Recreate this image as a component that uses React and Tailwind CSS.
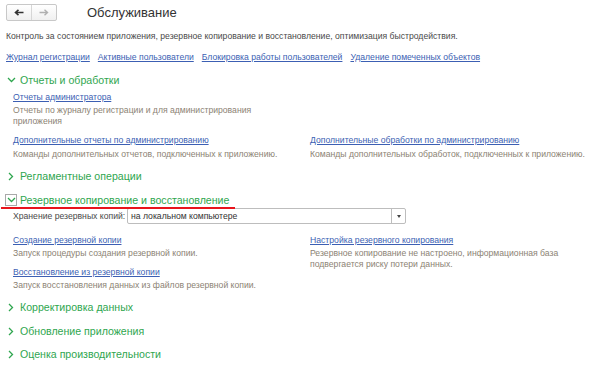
import React from "react";

const F = { fontFamily: '"Liberation Sans", Arial, sans-serif' };

function ChevDown() {
  return (
    <svg width="9" height="6" viewBox="0 0 9 6" className="shrink-0">
      <path d="M1 1 L4.5 4.5 L8 1" fill="none" stroke="#2fa64f" strokeWidth="1.3" />
    </svg>
  );
}
function ChevRight() {
  return (
    <svg width="6" height="9" viewBox="0 0 6 9" className="shrink-0">
      <path d="M1 1 L4.5 4.5 L1 8" fill="none" stroke="#2fa64f" strokeWidth="1.3" />
    </svg>
  );
}

function Link({ children }) {
  return <span className="text-[#3c5fb3] underline decoration-[#3c5fb3] underline-offset-[1px] text-[8.65px] leading-[12px] whitespace-nowrap">{children}</span>;
}
function LinkRow({ children, className = "" }) {
  return <div className={"h-[12px] leading-[12px] " + className}><Link>{children}</Link></div>;
}
function Desc({ children, className = "" }) {
  return <div className={"text-[#8c8374] text-[8.65px] leading-[11px] whitespace-nowrap " + className}>{children}</div>;
}
function Header({ open, boxed, children, className = "" }) {
  return (
    <div className={"flex items-center h-[18px] " + className}>
      {boxed ? (
        <div className="w-[12px] h-[12px] flex items-center justify-center ml-[5px] mr-[3px] border border-[#a9a9a9] bg-white">
          <ChevDown />
        </div>
      ) : (
        <div className="w-[12px] h-[12px] flex items-center justify-center ml-[5px] mr-[3px]">
          {open ? <ChevDown /> : <ChevRight />}
        </div>
      )}
      <span className="text-[#2fa64f] text-[10.6px] leading-[14px] whitespace-nowrap">{children}</span>
    </div>
  );
}

export default function App() {
  return (
    <div className="w-[601px] h-[377px] bg-white overflow-hidden" style={F}>
      {/* top bar */}
      <div className="flex items-center pt-[4px] pl-[6px]">
        <div className="flex h-[17px] border border-[#c8c8c8] rounded-[2px] bg-gradient-to-b from-white to-[#f0f0f0]">
          <div className="w-[25px] flex items-center justify-center border-r border-[#d6d6d6]">
            <svg width="10" height="7" viewBox="0 0 10 7"><path d="M9.5 3.5 H2 M4.5 0.8 L1.5 3.5 L4.5 6.2" fill="none" stroke="#333" strokeWidth="1.6" /></svg>
          </div>
          <div className="w-[24px] flex items-center justify-center">
            <svg width="10" height="7" viewBox="0 0 10 7"><path d="M0.5 3.5 H8 M5.5 0.8 L8.5 3.5 L5.5 6.2" fill="none" stroke="#b0b0b0" strokeWidth="1.4" /></svg>
          </div>
        </div>
        <div className="ml-[30px] text-[13px] text-[#333] leading-[17px]">Обслуживание</div>
      </div>

      <div className="pl-[6px] mt-[9px] h-[12px] text-[8.65px] leading-[12px] text-[#4a4a4a] whitespace-nowrap">
        Контроль за состоянием приложения, резервное копирование и восстановление, оптимизация быстродействия.
      </div>

      <div className="pl-[6px] mt-[9px] h-[12px] flex gap-[8px] leading-[12px]">
        <Link>Журнал регистрации</Link>
        <Link>Активные пользователи</Link>
        <Link>Блокировка работы пользователей</Link>
        <Link>Удаление помеченных объектов</Link>
      </div>

      <Header open className="mt-[8px]">Отчеты и обработки</Header>
      <div className="pl-[13px] grid grid-cols-[297px_1fr]">
        <div>
          <LinkRow>Отчеты администратора</LinkRow>
          <Desc className="mt-[4px]">Отчеты по журналу регистрации и для администрирования<br />приложения</Desc>
        </div>
        <div />
        <div className="mt-[5px]">
          <LinkRow>Дополнительные отчеты по администрированию</LinkRow>
          <Desc className="mt-[5px]">Команды дополнительных отчетов, подключенных к приложению.</Desc>
        </div>
        <div className="mt-[5px]">
          <LinkRow>Дополнительные обработки по администрированию</LinkRow>
          <Desc className="mt-[5px]">Команды дополнительных обработок, подключенных к приложению.</Desc>
        </div>
      </div>

      <Header className="mt-[7px]">Регламентные операции</Header>

      <div className="relative mt-[6px]">
        <Header open boxed className="!h-[17px]">Резервное копирование и восстановление</Header>
        <div className="absolute left-[1px] top-[16px] w-[234px] h-[2px] bg-[#e8141c]" />
      </div>
      <div className="pl-[13px] flex items-center h-[16px]">
        <span className="text-[8.65px] text-[#4a4a4a] w-[114px] whitespace-nowrap">Хранение резервных копий:</span>
        <div className="flex h-[16px] w-[279px] border border-[#bdbdbd] rounded-[2px] bg-white">
          <div className="flex-1 pl-[3px] text-[8.65px] text-[#333] leading-[14px] whitespace-nowrap">на локальном компьютере</div>
          <div className="w-[14px] border-l border-[#bdbdbd] flex items-center justify-center">
            <svg width="4" height="3" viewBox="0 0 4 3"><path d="M0 0 H4 L2 3 Z" fill="#444" /></svg>
          </div>
        </div>
      </div>
      <div className="pl-[13px] grid grid-cols-[297px_1fr] mt-[8px]">
        <div>
          <LinkRow>Создание резервной копии</LinkRow>
          <Desc className="mt-[4px]">Запуск процедуры создания резервной копии.</Desc>
          <LinkRow className="mt-[5px]">Восстановление из резервной копии</LinkRow>
          <Desc className="mt-[4px]">Запуск восстановления данных из файлов резервной копии.</Desc>
        </div>
        <div>
          <LinkRow>Настройка резервного копирования</LinkRow>
          <Desc className="mt-[4px]">Резервное копирование не настроено, информационная база<br />подвергается риску потери данных.</Desc>
        </div>
      </div>

      <Header className="mt-[7px]">Корректировка данных</Header>
      <Header className="mt-[6px]">Обновление приложения</Header>
      <Header className="mt-[5px]">Оценка производительности</Header>
    </div>
  );
}
